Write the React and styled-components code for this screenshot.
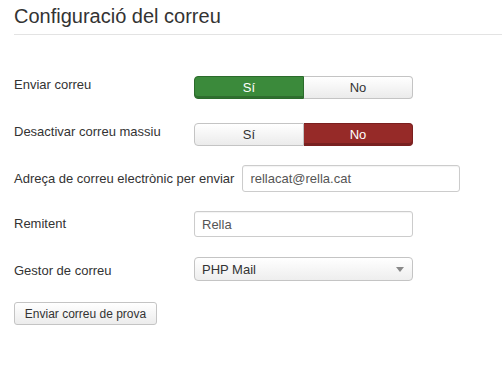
import React from 'react'
import styled, { createGlobalStyle } from 'styled-components'

const GlobalStyle = createGlobalStyle`
  body {
    margin: 0;
    background: #fff;
    font-family: "Liberation Sans", Arial, sans-serif;
    color: #333;
  }
`

const Page = styled.div`
  padding: 0 0 0 14px;
`

const Title = styled.h2`
  margin: 0;
  padding: 5px 0 7px;
  font-size: 20px;
  font-weight: normal;
  color: #333;
  line-height: 22px;
  border-bottom: 1px solid #e3e3e3;
`

const Form = styled.div`
  display: flex;
  flex-direction: column;
  padding-top: 41px;
`

const Row = styled.div`
  display: flex;
  align-items: flex-start;
  margin-bottom: ${p => p.gap || 20}px;
`

const Label = styled.label`
  flex: 0 0 auto;
  min-width: 172px;
  margin-right: 8px;
  padding-top: ${p => p.top || 2}px;
  font-size: 13px;
  line-height: 16px;
  color: #333;
`

const Toggle = styled.div`
  display: flex;
  width: 219px;
  height: 23px;
`

const ToggleBtn = styled.button`
  flex: 1;
  margin: 0;
  font-family: inherit;
  font-size: 13px;
  padding: 0;
  cursor: pointer;
  border: 1px solid ${p => (p.on === 'yes' ? '#2b6b2b' : p.on === 'no' ? '#7a1f1f' : '#c4c4c4')};
  color: ${p => (p.on ? '#fff' : '#333')};
  background: ${p =>
    p.on === 'yes' ? '#3b8a3b' : p.on === 'no' ? '#962a28' : 'linear-gradient(#fff, #ebebeb)'};
  box-shadow: ${p => (p.on ? 'inset 0 -2px 0 rgba(0,0,0,0.2)' : 'none')};
  &:first-child {
    border-radius: 4px 0 0 4px;
  }
  &:last-child {
    border-radius: 0 4px 4px 0;
    border-left: none;
  }
`

const Input = styled.input`
  box-sizing: border-box;
  width: ${p => p.w}px;
  height: ${p => p.h}px;
  margin: 0;
  padding: 0 7px;
  font-family: inherit;
  font-size: 13px;
  color: #555;
  border: 1px solid #ccc;
  border-radius: 3px;
  box-shadow: inset 0 1px 1px rgba(0,0,0,0.05);
  outline: none;
`

const Select = styled.div`
  box-sizing: border-box;
  display: flex;
  align-items: center;
  justify-content: space-between;
  width: 219px;
  height: 24px;
  padding: 0 8px 0 7px;
  font-size: 13px;
  color: #333;
  border: 1px solid #c4c4c4;
  border-radius: 4px;
  background: linear-gradient(#fff, #eeeeee);
`

const Caret = styled.span`
  width: 0;
  height: 0;
  border-left: 4px solid transparent;
  border-right: 4px solid transparent;
  border-top: 5px solid #888;
`

const Button = styled.button`
  box-sizing: border-box;
  width: 143px;
  height: 23px;
  margin: 0;
  font-family: inherit;
  font-size: 12px;
  color: #333;
  border: 1px solid #c4c4c4;
  border-radius: 3px;
  background: linear-gradient(#fff, #ececec);
  cursor: pointer;
`

export default function App() {
  return (
    <Page>
      <GlobalStyle />
      <Title>Configuració del correu</Title>
      <Form>
        <Row gap={24}>
          <Label top={1}>Enviar correu</Label>
          <Toggle>
            <ToggleBtn on="yes">Sí</ToggleBtn>
            <ToggleBtn>No</ToggleBtn>
          </Toggle>
        </Row>
        <Row gap={19}>
          <Label top={1}>Desactivar correu massiu</Label>
          <Toggle>
            <ToggleBtn>Sí</ToggleBtn>
            <ToggleBtn on="no">No</ToggleBtn>
          </Toggle>
        </Row>
        <Row gap={19}>
          <Label top={6}>Adreça de correu electrònic per enviar</Label>
          <Input w={218} h={27} defaultValue="rellacat@rella.cat" />
        </Row>
        <Row gap={20}>
          <Label top={5}>Remitent</Label>
          <Input w={219} h={26} defaultValue="Rella" />
        </Row>
        <Row gap={21}>
          <Label top={6}>Gestor de correu</Label>
          <Select>
            PHP Mail
            <Caret />
          </Select>
        </Row>
        <Row>
          <Button>Enviar correu de prova</Button>
        </Row>
      </Form>
    </Page>
  )
}
